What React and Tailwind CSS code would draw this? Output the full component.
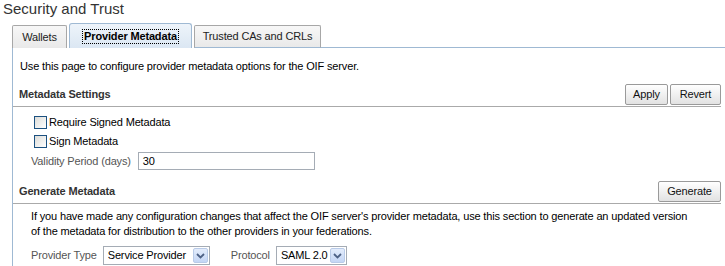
export default function App() {
  return (
    <div className="w-[725px] h-[266px] overflow-hidden bg-white text-[11px] tracking-[-0.15px] text-black" style={{ fontFamily: '"Liberation Sans", Arial, sans-serif' }}>
      {/* Заголовок */}
      <div className="pl-[3px] text-[15px] leading-[18px] tracking-normal text-[#333]">Security and Trust</div>

      {/* Вкладки */}
      <div className="flex items-end h-[30px] pl-[12px]">
        <div className="h-[23px] w-[55px] flex items-center justify-center border border-b-0 border-[#a7a7a7] rounded-t-[2px] bg-linear-to-b from-[#f7f7f7] to-[#e9e9e9] text-[#222]">
          Wallets
        </div>
        <div className="h-[25px] w-[123px] ml-[2px] flex items-center justify-center border border-b-0 border-[#9fb9d3] rounded-t-[3px] bg-linear-to-b from-[#eef4fa] to-[#dbe7f3]">
          <span className="font-bold outline outline-1 outline-dotted outline-black px-[1px] leading-[13px]">Provider Metadata</span>
        </div>
        <div className="h-[23px] w-[127px] ml-[2px] flex items-center justify-center border border-[#a7a7a7] border-b-[#9fb9d3] rounded-t-[2px] bg-linear-to-b from-[#f7f7f7] to-[#e9e9e9] text-[#222]">
          Trusted CAs and CRLs
        </div>
        <div className="flex-1 border-b border-[#9fb9d3]"></div>
      </div>

      {/* Панель */}
      <div className="ml-[12px] border-l border-[#9fb9d3] h-[230px]">
        <div className="pl-[7px] pt-[12px] leading-[13px]">Use this page to configure provider metadata options for the OIF server.</div>

        {/* Metadata Settings */}
        <div className="mt-[11px] mr-[4px] flex items-end justify-between border-b border-[#aaaaaa] pl-[6px]">
          <div className="font-bold text-[#333] pb-[4px]">Metadata Settings</div>
          <div className="flex gap-[2px] pb-[1px]">
            <button className="h-[21px] w-[43px] border border-[#9a9a9a] rounded-[2px] bg-linear-to-b from-white to-[#e2e2e2] text-[#111]">Apply</button>
            <button className="h-[21px] w-[51px] border border-[#9a9a9a] rounded-[2px] bg-linear-to-b from-white to-[#e2e2e2] text-[#111]">Revert</button>
          </div>
        </div>

        <div className="pl-[21px] pt-[8px] flex flex-col gap-[5px]">
          <label className="flex items-center gap-[2px] h-[14px]">
            <span className="w-[13px] h-[13px] border border-[#1c5180] bg-linear-to-br from-[#dcdcd8] to-white"></span>
            Require Signed Metadata
          </label>
          <label className="flex items-center gap-[2px] h-[14px]">
            <span className="w-[13px] h-[13px] border border-[#1c5180] bg-linear-to-br from-[#dcdcd8] to-white"></span>
            Sign Metadata
          </label>
        </div>
        <div className="pl-[18px] mt-[4px] flex items-center">
          <span className="text-[#555]">Validity Period (days)</span>
          <div className="ml-[7px] w-[177px] h-[18px] border border-[#a5acb5] flex items-center pl-[4px]">30</div>
        </div>

        {/* Generate Metadata */}
        <div className="mt-[11px] mr-[4px] flex items-end justify-between border-b border-[#aaaaaa] pl-[6px]">
          <div className="font-bold text-[#333] pb-[4px]">Generate Metadata</div>
          <div className="pb-[1px]">
            <button className="h-[21px] w-[63px] border border-[#9a9a9a] rounded-[2px] bg-linear-to-b from-white to-[#e2e2e2] text-[#111]">Generate</button>
          </div>
        </div>
        <div className="pl-[18px] pt-[5px] leading-[15px]">
          If you have made any configuration changes that affect the OIF server's provider metadata, use this section to generate an updated version
          <br />
          of the metadata for distribution to the other providers in your federations.
        </div>

        <div className="pl-[18px] mt-[7px] flex items-center">
          <span className="text-[#555]">Provider Type</span>
          <div className="ml-[6px] w-[107px] h-[19px] border border-[#a5acb5] flex items-center justify-between pl-[4px] pr-[1px]">
            <span>Service Provider</span>
            <Arrow />
          </div>
          <span className="ml-[21px] text-[#555]">Protocol</span>
          <div className="ml-[6px] w-[71px] h-[19px] border border-[#a5acb5] flex items-center justify-between pl-[4px] pr-[1px]">
            <span>SAML 2.0</span>
            <Arrow />
          </div>
        </div>
      </div>
    </div>
  );
}

function Arrow() {
  return (
    <span className="w-[15px] h-[15px] rounded-[2px] border border-[#b9cbe8] bg-linear-to-b from-[#e3ecfb] to-[#c4d6f5] flex items-center justify-center">
      <svg width="9" height="6" viewBox="0 0 9 6">
        <path d="M1 1 L4.5 4.5 L8 1" fill="none" stroke="#4d6185" strokeWidth="1.8" />
      </svg>
    </span>
  );
}
